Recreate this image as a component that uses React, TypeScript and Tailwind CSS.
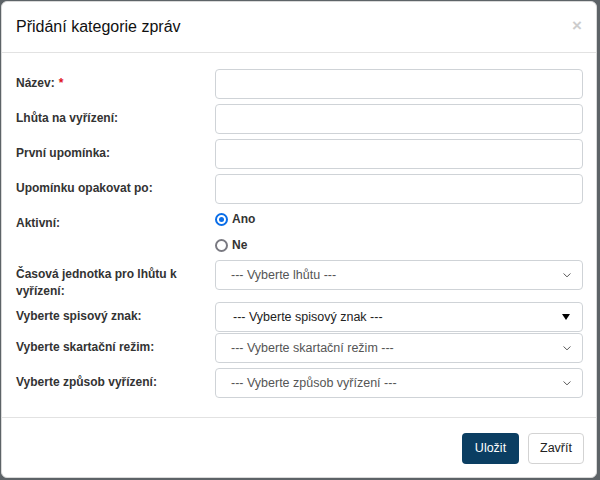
import React from 'react';

const font = { fontFamily: '"Liberation Sans", Arial, sans-serif' };

function Chevron() {
  return (
    <svg className="w-[10px] h-[10px] text-[#555]" viewBox="0 0 16 16" fill="none">
      <path d="M3 6l5 5 5-5" stroke="currentColor" strokeWidth="1.6" strokeLinecap="round" strokeLinejoin="round" />
    </svg>
  );
}

function TextInput() {
  return <div className="h-[30px] w-full rounded-[4px] border border-[#cfd3d7] bg-white" />;
}

function SelectBox({ text, caret = 'chevron' }: { text: string; caret?: 'chevron' | 'triangle' }) {
  return (
    <div className="h-[30px] w-full rounded-[4px] border border-[#cfd3d7] bg-white flex items-center justify-between pl-[15px] pr-[10px]">
      <span className={caret === 'triangle' ? 'text-[12.5px] text-[#222] pl-[2px]' : 'text-[12.5px] text-[#555]'}>{text}</span>
      {caret === 'triangle' ? (
        <span className="w-0 h-0 border-l-[4px] border-r-[4px] border-t-[6px] border-l-transparent border-r-transparent border-t-black mr-[2px]" />
      ) : (
        <Chevron />
      )}
    </div>
  );
}

function Radio({ label, checked }: { label: string; checked?: boolean }) {
  return (
    <div className="h-[20px] flex items-center gap-[4px]">
      {checked ? (
        <span className="w-[13px] h-[13px] rounded-full border-[2px] border-[#0b6ee8] flex items-center justify-center">
          <span className="w-[5px] h-[5px] rounded-full bg-[#0b6ee8]" />
        </span>
      ) : (
        <span className="w-[13px] h-[13px] rounded-full border-[2px] border-[#7a7a82]" />
      )}
      <span className="text-[12px] font-bold text-[#333]">{label}</span>
    </div>
  );
}

function Row({ label, required, children, className = 'mb-[5px]' }: { label: string; required?: boolean; children: React.ReactNode; className?: string }) {
  return (
    <div className={`grid grid-cols-[199px_1fr] ${className}`}>
      <div className="pt-[6px] pr-[10px] text-[12px] leading-[17px] font-bold text-[#333]">
        {label}
        {required && <span className="text-[#e0141e] ml-[4px]">*</span>}
      </div>
      <div>{children}</div>
    </div>
  );
}

export default function App() {
  return (
    <div className="w-[600px] h-[480px] bg-[#5d6367] pl-px pt-px" style={font}>
      <div className="w-[596px] h-[477px] bg-white rounded-[6px] border border-[#d9d9d9] flex flex-col overflow-hidden">
        <div className="h-[51px] shrink-0 border-b border-[#e2e2e2] flex items-center justify-between pl-[14px] pr-[14px]">
          <h1 className="text-[16px] text-[#111] pb-[1px]">Přidání kategorie zpráv</h1>
          <span className="text-[17px] font-bold leading-none text-[#cdcdcd] pb-[3px]">×</span>
        </div>

        <div className="pt-[16px] pl-[14px] pr-[13px] pb-[19px] border-b border-[#e2e2e2]">
          <Row label="Název:" required>
            <TextInput />
          </Row>
          <Row label="Lhůta na vyřízení:">
            <TextInput />
          </Row>
          <Row label="První upomínka:">
            <TextInput />
          </Row>
          <Row label="Upomínku opakovat po:">
            <TextInput />
          </Row>
          <Row label="Aktivní:">
            <div className="flex flex-col gap-[6px]">
              <Radio label="Ano" checked />
              <Radio label="Ne" />
            </div>
          </Row>
          <Row label="Časová jednotka pro lhůtu k vyřízení:" className="mb-[2px]">
            <SelectBox text="--- Vyberte lhůtu ---" />
          </Row>
          <Row label="Vyberte spisový znak:" className="mb-px">
            <SelectBox text="--- Vyberte spisový znak ---" caret="triangle" />
          </Row>
          <Row label="Vyberte skartační režim:">
            <SelectBox text="--- Vyberte skartační režim ---" />
          </Row>
          <Row label="Vyberte způsob vyřízení:" className="">
            <SelectBox text="--- Vyberte způsob vyřízení ---" />
          </Row>
        </div>

        <div className="flex justify-end gap-[9px] pt-[15px] pr-[12px]">
          <button className="h-[31px] w-[57px] rounded-[4px] bg-[#0b3e62] text-white text-[12.5px]">Uložit</button>
          <button className="h-[31px] w-[56px] rounded-[4px] border border-[#d3d3d3] bg-white text-[#222] text-[12.5px]">Zavřít</button>
        </div>
      </div>
    </div>
  );
}
